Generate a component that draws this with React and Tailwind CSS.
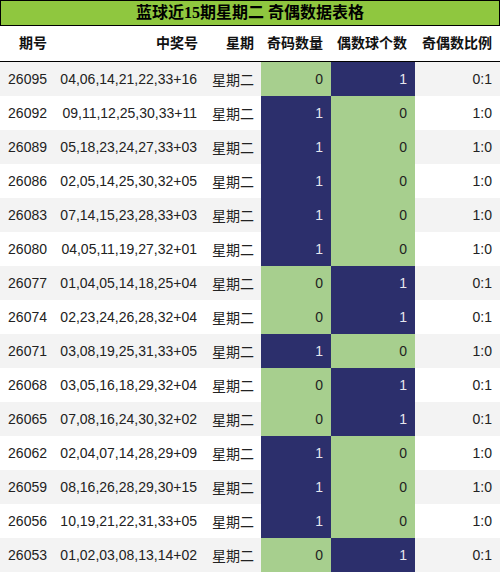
const rows = [
  ["26095", "04,06,14,21,22,33+16", 0, 1],
  ["26092", "09,11,12,25,30,33+11", 1, 0],
  ["26089", "05,18,23,24,27,33+03", 1, 0],
  ["26086", "02,05,14,25,30,32+05", 1, 0],
  ["26083", "07,14,15,23,28,33+03", 1, 0],
  ["26080", "04,05,11,19,27,32+01", 1, 0],
  ["26077", "01,04,05,14,18,25+04", 0, 1],
  ["26074", "02,23,24,26,28,32+04", 0, 1],
  ["26071", "03,08,19,25,31,33+05", 1, 0],
  ["26068", "03,05,16,18,29,32+04", 0, 1],
  ["26065", "07,08,16,24,30,32+02", 0, 1],
  ["26062", "02,04,07,14,28,29+09", 1, 0],
  ["26059", "08,16,26,28,29,30+15", 1, 0],
  ["26056", "10,19,21,22,31,33+05", 1, 0],
  ["26053", "01,02,03,08,13,14+02", 0, 1],
];

const cellColor = (v) =>
  v === 1 ? "bg-[#2c2f6c] text-[#e6e6ee]" : "bg-[#a7cf8e] text-[#222]";

export default function App() {
  return (
    <div className="w-[500px] h-[573px] bg-white overflow-hidden font-['Liberation_Sans','Noto_Sans_CJK_SC',sans-serif] text-[14px] text-[#222]">
      <div className="h-[26px] border border-black bg-[#8fc73f] flex items-center justify-center font-bold text-[16px] text-black font-['Liberation_Serif','Noto_Sans_CJK_SC',serif]">
        蓝球近15期星期二 奇偶数据表格
      </div>
      <div className="h-[36px] flex items-center font-bold text-[#111] border-b border-black">
        <div className="w-[55px] text-right pr-[8px]">期号</div>
        <div className="w-[150px] text-right pr-[7px]">中奖号</div>
        <div className="w-[56px] text-right pr-[7px]">星期</div>
        <div className="w-[70px] text-right pr-[8px]">奇码数量</div>
        <div className="w-[84px] text-right pr-[8px]">偶数球个数</div>
        <div className="w-[85px] text-right pr-[8px]">奇偶数比例</div>
      </div>
      {rows.map(([id, nums, odd, even], i) => (
        <div
          key={id}
          className={`h-[34px] flex items-stretch ${i % 2 === 0 ? "bg-[#f3f3f3]" : "bg-white"}`}
        >
          <div className="w-[55px] flex items-center justify-end pr-[8px]">{id}</div>
          <div className="w-[150px] flex items-center justify-end pr-[8px]">{nums}</div>
          <div className="w-[56px] flex items-center justify-end pr-[7px] pt-[3px]">星期二</div>
          <div className={`w-[70px] flex items-center justify-end pr-[8px] ${cellColor(odd)}`}>{odd}</div>
          <div className={`w-[84px] flex items-center justify-end pr-[8px] ${cellColor(even)}`}>{even}</div>
          <div className="w-[85px] flex items-center justify-end pr-[8px]">
            {odd}:{even}
          </div>
        </div>
      ))}
    </div>
  );
}
